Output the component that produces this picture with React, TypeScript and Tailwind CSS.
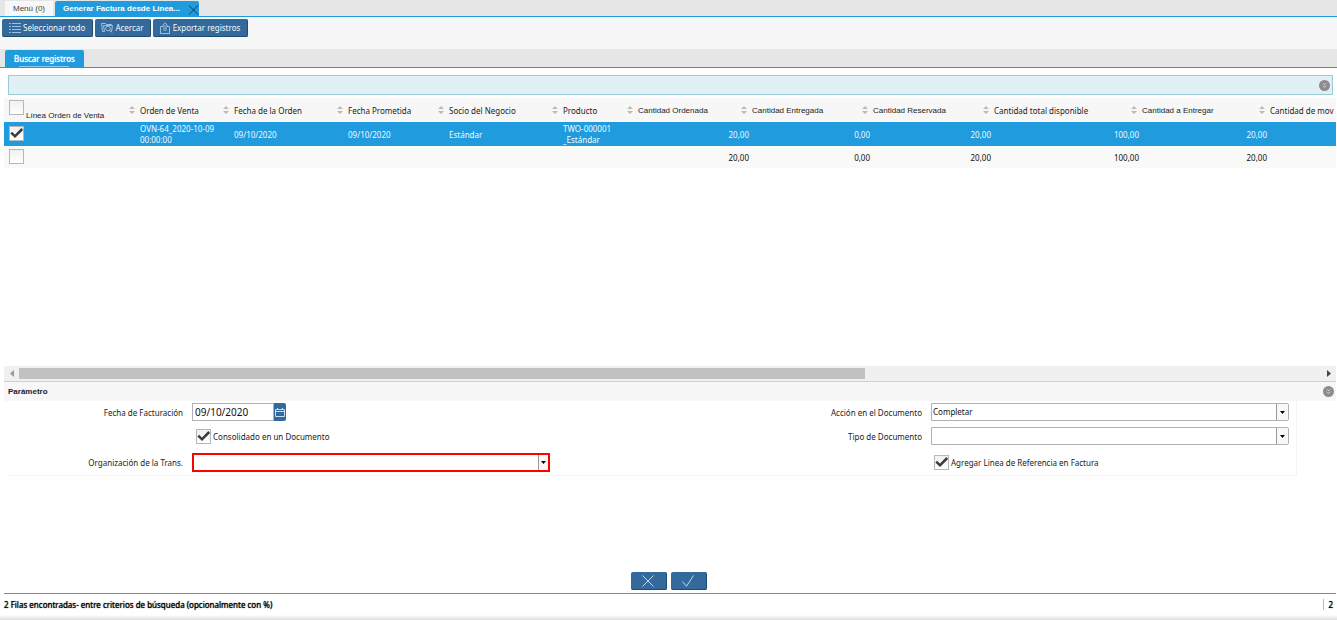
import React, { useState } from "react";

const columns = [
  { label: "Línea Orden de Venta", width: "w-[134px]", arial: true },
  { label: "Orden de Venta", width: "w-[94px]", arial: false },
  { label: "Fecha de la Orden", width: "w-[114px]", arial: false },
  { label: "Fecha Prometida", width: "w-[101px]", arial: false },
  { label: "Socio del Negocio", width: "w-[114px]", arial: false },
  { label: "Producto", width: "w-[75px]", arial: false },
  { label: "Cantidad Ordenada", width: "w-[114px]", arial: true },
  { label: "Cantidad Entregada", width: "w-[121px]", arial: true },
  { label: "Cantidad Reservada", width: "w-[121px]", arial: true },
  { label: "Cantidad total disponible", width: "w-[148px]", arial: false },
  { label: "Cantidad a Entregar", width: "w-[128px]", arial: true },
  { label: "Cantidad de mov", width: "w-auto", arial: false },
];

const rows = [
  {
    id: 1,
    text: ["OVN-64_2020-10-09 00:00:00", "09/10/2020", "09/10/2020", "Estándar", "TWO-000001 _Estándar"],
    amounts: ["20,00", "0,00", "20,00", "100,00", "20,00"],
  },
  {
    id: 2,
    text: ["", "", "", "", ""],
    amounts: ["20,00", "0,00", "20,00", "100,00", "20,00"],
  },
];

const SortIcon = () => (
  <svg width="6" height="8" viewBox="0 0 6 8" fill="#bdbab0" className="shrink-0">
    <path d="M3 0 6 3H0zM3 8 0 5h6z" />
  </svg>
);

interface CheckboxProps {
  id?: string;
  label?: string;
  checked: boolean;
  onChange: () => void;
}

const Checkbox: React.FC<CheckboxProps> = ({ id, label, checked, onChange }) => (
  <span className="relative block size-[15px] shrink-0">
    <input
      id={id}
      type="checkbox"
      aria-label={label}
      checked={checked}
      onChange={onChange}
      className="block size-[15px] appearance-none border border-[#b4b8bb] bg-linear-to-b from-[#f0f0f0] to-white"
    />
    {checked && (
      <svg viewBox="0 0 15 15" className="pointer-events-none absolute inset-0 size-[15px]">
        <path d="M2.2 6.7 6 10.3 13.2 3" fill="none" stroke="#3a3a3a" strokeWidth="2.5" />
      </svg>
    )}
  </span>
);

interface ComboProps {
  id: string;
  options: string[];
  required?: boolean;
}

const Combo: React.FC<ComboProps> = ({ id, options, required }) => (
  <div
    className={`flex w-full items-stretch bg-white ${
      required ? "h-[19px] border-2 border-[#ff0000]" : "h-[18px] rounded-r-[2px] border border-[#b0b0b0]"
    }`}
  >
    <select id={id} className="min-w-0 flex-1 appearance-none pl-px text-[8px] leading-[14px] text-[#111] outline-none">
      {options.map((option) => (
        <option key={option}>{option}</option>
      ))}
    </select>
    <span
      className={`flex items-center justify-center border-l border-[#9a9a9a] bg-[#f8f8f8] ${
        required ? "w-[10px]" : "w-3"
      }`}
    >
      <svg width="5" height="3" viewBox="0 0 5 3">
        <path d="M0 0h5L2.5 3z" fill="#000" />
      </svg>
    </span>
  </div>
);

const CollapseButton = ({ label }: { label: string }) => (
  <button aria-label={label} className="flex size-[11px] items-center justify-center rounded-full bg-[#8c8c8c]">
    <svg width="5" height="5" viewBox="0 0 5 5" fill="none" stroke="#dcdcdc" strokeWidth="1">
      <path d="M1 .3 2.5 1.8 4 .3M1 2.8 2.5 4.3 4 2.8" />
    </svg>
  </button>
);

const toolButton =
  "flex h-[18px] items-center rounded-[2px] border-r border-b border-[#1b4c72] bg-[#336a9b] text-[#f4f8fb]";

const App: React.FC = () => {
  const [selected, setSelected] = useState<number[]>([1]);
  const [consolidated, setConsolidated] = useState(true);
  const [addReference, setAddReference] = useState(true);
  const [date, setDate] = useState("09/10/2020");

  const toggleRow = (id: number) => {
    setSelected(selected.includes(id) ? selected.filter((item) => item !== id) : [...selected, id]);
  };
  const toggleAll = () => setSelected(selected.length === rows.length ? [] : rows.map((row) => row.id));

  return (
    <div className="flex min-h-screen flex-col overflow-hidden bg-white font-['Noto_Sans','Open_Sans',sans-serif] text-[8px] leading-[11px] text-[#222]">
      {/* Window tabs */}
      <nav className="flex h-[17px] items-end border-b border-[#1f9bde] bg-[#e6e6e6] pl-[5px] font-['Liberation_Sans',Arial,sans-serif]">
        <button className="mr-[2px] h-[15px] bg-[#f7f7f7] px-2 text-[#444]">Menú (0)</button>
        <div className="flex h-[15px] items-center rounded-t-[2px] bg-[#1f9bde] pl-2 font-bold text-white">
          <button>Generar Factura desde Línea...</button>
          <button aria-label="Cerrar" className="ml-2 flex pt-[2px]">
            <svg width="11" height="10" viewBox="0 0 11 10" stroke="#123f5e" strokeWidth="1">
              <path d="m1 .5 9 9m0-9-9 9" />
            </svg>
          </button>
        </div>
      </nav>

      {/* Toolbar */}
      <div className="flex h-8 items-start gap-[2px] bg-[#f7f7f7] pt-[2px] pl-[2px]">
        <button className={`${toolButton} gap-[2px] px-[7px]`} onClick={toggleAll}>
          <svg width="12" height="11" viewBox="0 0 12 11" stroke="#9fc0dc" strokeWidth="1">
            <path d="M0 1.5h2M0 4.5h2M0 7.5h2M0 10.5h2M3 1.5h9M3 4.5h9M3 7.5h9M3 10.5h9" />
          </svg>
          Seleccionar todo
        </button>
        <button className={`${toolButton} gap-[2px] px-[6px]`}>
          <svg width="12" height="11" viewBox="0 0 12 11" fill="none" stroke="#9fc0dc" strokeWidth="1">
            <path d="M3.5 9.5h-2l-1-8h4l1 1h5v1M9.500 9.500h1l1-6h-9l1 6" />
            <circle cx="7" cy="6.5" r="2.3" />
            <path d="m8.700 8.200 2.300 2.300" />
          </svg>
          Acercar
        </button>
        <button className={`${toolButton} gap-[3px] px-[7px]`}>
          <svg width="10" height="12" viewBox="0 0 10 12" fill="none" stroke="#9fc0dc" strokeWidth="1">
            <path d="M3 4.500H.5v7h9v-7H7M4 9V3M6 9V3M2.500 3.500 5 .7l2.500 2.800" />
          </svg>
          Exportar registros
        </button>
      </div>

      {/* Inner tab */}
      <nav className="flex h-[19px] items-end border-b border-[#1f9bde] bg-[#e6e6e6] pl-[5px]">
        <button className="flex h-[17px] flex-col items-center justify-between rounded-t-[2px] bg-[#1f9bde] px-[9px] pt-[3px] text-white [text-shadow:0_0_1px_#fff]">
          Buscar registros
          <span className="h-px w-[50px] bg-[#8ccdf0]" />
        </button>
      </nav>

      {/* Search criteria */}
      <div className="mt-[7px] mr-1 ml-2 flex h-5 items-center justify-end border border-[#9ccbd6] bg-[#e0f0f4] pr-[2px]">
        <CollapseButton label="Mostrar criterios" />
      </div>

      {/* Results */}
      <div className="mt-[3px] mr-px ml-1 h-[268px] overflow-hidden">
        <table className="w-full table-fixed border-collapse">
          <thead>
            <tr className="h-6 bg-[#f7f7f7]">
              {columns.map((column, index) => (
                <th key={column.label} className={`p-0 text-left font-normal ${column.width}`}>
                  <div className="flex items-center justify-between pr-[3px] pl-[2px]">
                    {index === 0 ? (
                      <span className="flex items-end gap-[2px] pl-[3px] font-['Liberation_Sans',Arial,sans-serif]">
                        <span className="pb-[6px]">
                          <Checkbox
                            label="Seleccionar todas las filas"
                            checked={selected.length === rows.length}
                            onChange={toggleAll}
                          />
                        </span>
                        <span className="whitespace-nowrap">{column.label}</span>
                      </span>
                    ) : (
                      <span
                        className={`whitespace-nowrap ${
                          column.arial ? "font-['Liberation_Sans',Arial,sans-serif]" : ""
                        }`}
                      >
                        {column.label}
                      </span>
                    )}
                    {index < columns.length - 1 && <SortIcon />}
                  </div>
                </th>
              ))}
            </tr>
          </thead>
          <tbody>
            {rows.map((row) => {
              const active = selected.includes(row.id);
              return (
                <tr
                  key={row.id}
                  className={active ? "h-6 bg-[#1f9bde] text-[#f2f9fd]" : "h-[22px] bg-[#f9f9f8] text-[#111]"}
                >
                  <td className="p-0 pb-px pl-[5px]">
                    <Checkbox label={`Fila ${row.id}`} checked={active} onChange={() => toggleRow(row.id)} />
                  </td>
                  {row.text.map((value, index) => (
                    <td key={index} className="p-0 pl-[2px]">
                      {value}
                    </td>
                  ))}
                  {row.amounts.map((value, index) => (
                    <td key={index} className="p-0 pr-px text-right">
                      {value}
                    </td>
                  ))}
                  <td />
                </tr>
              );
            })}
          </tbody>
        </table>
      </div>

      {/* Horizontal scrollbar */}
      <div className="mr-px ml-1 flex h-[15px] items-center bg-[#f0f0f0]">
        <button aria-label="Desplazar a la izquierda" className="flex w-[15px] justify-center">
          <svg width="4" height="7" viewBox="0 0 4 7" fill="#9a9a9a">
            <path d="M4 0v7L0 3.5z" />
          </svg>
        </button>
        <div className="flex-1">
          <div className="h-[11px] w-[65%] bg-[#c1c1c1]" />
        </div>
        <button aria-label="Desplazar a la derecha" className="flex w-[15px] justify-center">
          <svg width="4" height="7" viewBox="0 0 4 7" fill="#444">
            <path d="M0 0v7l4-3.5z" />
          </svg>
        </button>
      </div>

      {/* Parameters */}
      <div className="mr-px ml-1 flex h-5 items-center justify-between border-t border-[#cfcfcf] bg-[#f7f7f7] pr-[2px] pl-1">
        <h2 className="font-['Liberation_Sans',Arial,sans-serif] font-bold">Parámetro</h2>
        <CollapseButton label="Contraer parámetros" />
      </div>

      <form className="mr-10 ml-2 grid grid-cols-[175fr_358fr_363fr_358fr] grid-rows-[22px_26px_26px] items-center gap-x-[9px] border-r border-b border-[#f5f5f5] pr-[7px]">
        <label htmlFor="invoice-date" className="text-right">
          Fecha de Facturación
        </label>
        <div className="flex h-[18px]">
          <input
            id="invoice-date"
            type="text"
            value={date}
            onChange={(event) => setDate(event.target.value)}
            className="w-[82px] border border-[#b0b0b0] pl-[2px] text-[10px] text-[#111] outline-none"
          />
          <button
            type="button"
            aria-label="Abrir calendario"
            className="flex w-3 items-center justify-center rounded-r-[2px] bg-[#336a9b]"
          >
            <svg width="10" height="9" viewBox="0 0 10 9" fill="none" stroke="#c5dcec" strokeWidth="1">
              <path d="M.5 1.5h9v7h-9zM.5 3.5h9M2.5 0v2M7.5 0v2" />
            </svg>
          </button>
        </div>
        <label htmlFor="doc-action" className="text-right">
          Acción en el Documento
        </label>
        <Combo id="doc-action" options={["Completar", "Preparar"]} />

        <div className="col-start-2 flex items-center gap-[2px] pl-1">
          <Checkbox id="consolidated" checked={consolidated} onChange={() => setConsolidated(!consolidated)} />
          <label htmlFor="consolidated">Consolidado en un Documento</label>
        </div>
        <label htmlFor="doc-type" className="text-right">
          Tipo de Documento
        </label>
        <Combo id="doc-type" options={[""]} />

        <label htmlFor="organization" className="text-right">
          Organización de la Trans.
        </label>
        <Combo id="organization" options={[""]} required />
        <div className="col-start-4 flex items-center gap-[2px] pl-[3px]">
          <Checkbox id="add-reference" checked={addReference} onChange={() => setAddReference(!addReference)} />
          <label htmlFor="add-reference">Agregar Linea de Referencia en Factura</label>
        </div>
      </form>

      {/* Confirm buttons */}
      <div className="flex flex-1 items-end justify-center gap-1 pb-[3px]">
        <button aria-label="Cancelar" className={`${toolButton} w-9 justify-center`}>
          <svg width="12" height="12" viewBox="0 0 12 12" stroke="#c0d8ea" strokeWidth="1">
            <path d="m.5.5 11 11m0-11-11 11" />
          </svg>
        </button>
        <button aria-label="Aceptar" className={`${toolButton} w-9 justify-center`}>
          <svg width="12" height="12" viewBox="0 0 12 12" fill="none" stroke="#c0d8ea" strokeWidth="1">
            <path d="M.5 6.5 4.5 11.3 11.5.5" />
          </svg>
        </button>
      </div>

      {/* Status bar */}
      <footer className="mr-px ml-1 flex h-[22px] items-center justify-between border-t border-[#8b8878] text-black [text-shadow:0_0_1px_#000]">
        <span>2 Filas encontradas- entre criterios de búsqueda (opcionalmente con %)</span>
        <span className="border-l border-[#a9b8f0] pr-[3px] pl-1">2</span>
      </footer>
      <div className="h-[5px] bg-linear-to-b from-white to-[#dedede]" />
    </div>
  );
};

export default App;
